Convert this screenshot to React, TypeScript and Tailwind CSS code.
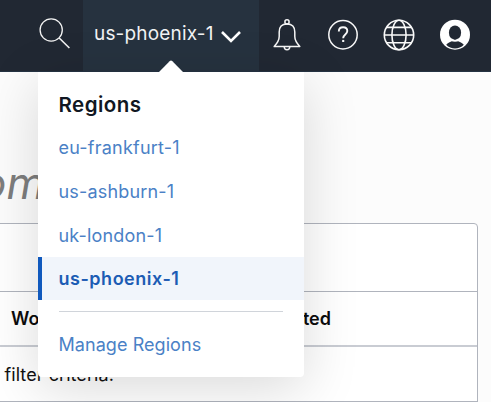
import React from "react";

const regions = [
  { name: "eu-frankfurt-1", spacing: "tracking-[0.22px]" },
  { name: "us-ashburn-1", spacing: "tracking-[0.18px]" },
  { name: "uk-london-1", spacing: "tracking-[0.18px]" },
];

function SearchIcon() {
  return (
    <svg className="h-8 w-8" viewBox="0 0 32 32" fill="none" stroke="#f3f3f3" strokeWidth="1.3">
      <circle cx="12.2" cy="13" r="11.1" />
      <path d="M20.2 21 30.4 31" strokeWidth="1.6" />
    </svg>
  );
}

function BellIcon() {
  return (
    <svg className="h-8 w-7" viewBox="0 0 28 32" fill="none" stroke="#f5f5f5" strokeWidth="1.5" strokeLinejoin="round">
      <circle cx="14" cy="2.9" r="2.1" />
      <path d="M14 5C8.5 5 6.200 8.6 6.200 13v4.6c0 4-2.200 7-5 10h25.600c-2.800-3-5-6-5-10V13c0-4.400-2.300-8-7.800-8Z" />
      <path d="M11.200 27.800c.1 3.900 5.500 3.900 5.600 0" />
    </svg>
  );
}

function HelpIcon() {
  return (
    <svg className="h-8 w-8" viewBox="0 0 32 32" fill="none" stroke="#f8f8f8">
      <circle cx="16" cy="15.700" r="14.2" strokeWidth="1.5" />
      <path d="M11.800 12.500c0-2.500 1.700-4.200 4.300-4.200 2.400 0 4.200 1.500 4.200 3.800 0 3.300-4.100 3.400-4.100 6.900v.3" strokeWidth="1.900" />
      <path d="M16.200 20.900v2.100" strokeWidth="2.100" />
    </svg>
  );
}

function GlobeIcon() {
  return (
    <svg className="h-8 w-8" viewBox="0 0 32 32" fill="none" stroke="#fafafa" strokeWidth="1.6">
      <circle cx="16" cy="16" r="14.700" />
      <ellipse cx="16" cy="16" rx="7.100" ry="14.700" />
      <path d="M1.300 16h29.400M4 8.400h24M4 23.700h24" />
    </svg>
  );
}

function UserIcon() {
  return (
    <svg className="h-8 w-8" viewBox="0 0 32 32">
      <circle cx="16" cy="15.700" r="15" fill="#fff" />
      <ellipse cx="16" cy="13.700" rx="6.100" ry="7.300" fill="#212833" />
      <path d="M7.200 25.700c2-2.500 4.700-2.700 6.500-4.200h4.600c1.800 1.500 4.500 1.700 6.500 4.200-4.800 5.100-12.800 5.100-17.600 0Z" fill="#212833" />
      <path d="M12.800 19.300c.5 1.700-.1 2.400-.8 2.800 2.400 1 5.600 1 8 0-.7-.4-1.300-1.100-.8-2.800-1.800 2.200-4.600 2.200-6.400 0Z" fill="#fff" />
    </svg>
  );
}

function RegionMenu() {
  return (
    <div className="absolute left-[37.5px] top-[72px] h-[305px] w-[266.5px] rounded-b-[4px] bg-white pt-[10px] shadow-[0_12px_55px_rgba(0,0,0,0.15)]">
      <h2 className="flex h-[43px] items-center pl-[21px] pt-[3px] text-[20.5px] font-semibold tracking-[0.48px] text-[#111722]">Regions</h2>
      <ul className="text-[18px] text-[#4a81c6]">
        {regions.map((r) => (
          <li key={r.name} className={`flex h-11 items-center pl-[21px] ${r.spacing}`}>{r.name}</li>
        ))}
        <li className="flex h-[43px] items-center border-l-4 border-[#1059bd] bg-[#f1f5fb] pl-[17px] font-semibold tracking-[0.52px] text-[#1c5cb4]">us-phoenix-1</li>
      </ul>
      <div className="mx-[21px] mt-[10.500px] h-px bg-[#d0d4da]" />
      <a className="mt-[11px] flex h-11 items-center pl-[21px] text-[18px] tracking-[0.06px] text-[#4a81c6]">Manage Regions</a>
    </div>
  );
}

export default function App() {
  return (
    <div className="relative h-[402px] w-[491px] overflow-hidden bg-[#fcfcfc] font-['Inter','Liberation_Sans',sans-serif]">
      <header className="flex h-[72px] border-b border-[#253343] bg-[#212833]">
        <div className="w-[82.5px] pl-[39px] pt-[17px]"><SearchIcon /></div>
        <div className="flex w-[176.5px] items-center bg-[#26323f] pb-[2px] pl-[11.5px] text-[19px] tracking-[0.17px] text-[#f1f2f4]">
          <span className="w-[122.5px] whitespace-nowrap">us-phoenix-1</span>
          <svg className="ml-[3px] mt-[4px] h-[14px] w-[22px]" viewBox="0 0 22 14" fill="none" stroke="#fff" strokeWidth="2.600"><path d="m2 2 9 9 9-9" /></svg>
        </div>
        <div className="flex pl-[14px] pt-[19px]">
          <BellIcon />
          <div className="ml-[26px]"><HelpIcon /></div>
          <div className="ml-[24px]"><GlobeIcon /></div>
          <div className="ml-[24px]"><UserIcon /></div>
        </div>
      </header>
      <main>
        <h1 className="-ml-[20px] flex h-[151px] items-start pt-[83px] text-[44px] font-normal italic leading-[56px] text-[#7d7d7d]">om</h1>
        <section className="-ml-2 h-[200px] w-[486px] rounded-tr-[4px] border border-[#b0b4bd] bg-white">
          <div className="h-[68px] border-b border-[#b0b4bd]" />
          <div className="flex h-[55px] items-center justify-between border-b-2 border-[#c9ccd3] pl-[18px] pr-[146px] text-[18px] font-semibold text-[#0c0c0c]">
            <span>Workload</span><span>Created</span>
          </div>
          <div className="flex h-[55px] items-center border-b border-[#b0b4bd] pl-[11.5px] text-[18px] tracking-[0.07px] text-[#111]">filter criteria.</div>
        </section>
      </main>
      <RegionMenu />
      <svg className="absolute left-[158px] top-[60px] h-[12px] w-[26px]" viewBox="0 0 26 12"><path d="M1 12 11.600 1.200Q13-.1 14.400 1.200L25 12Z" fill="#fff" /></svg>
    </div>
  );
}
